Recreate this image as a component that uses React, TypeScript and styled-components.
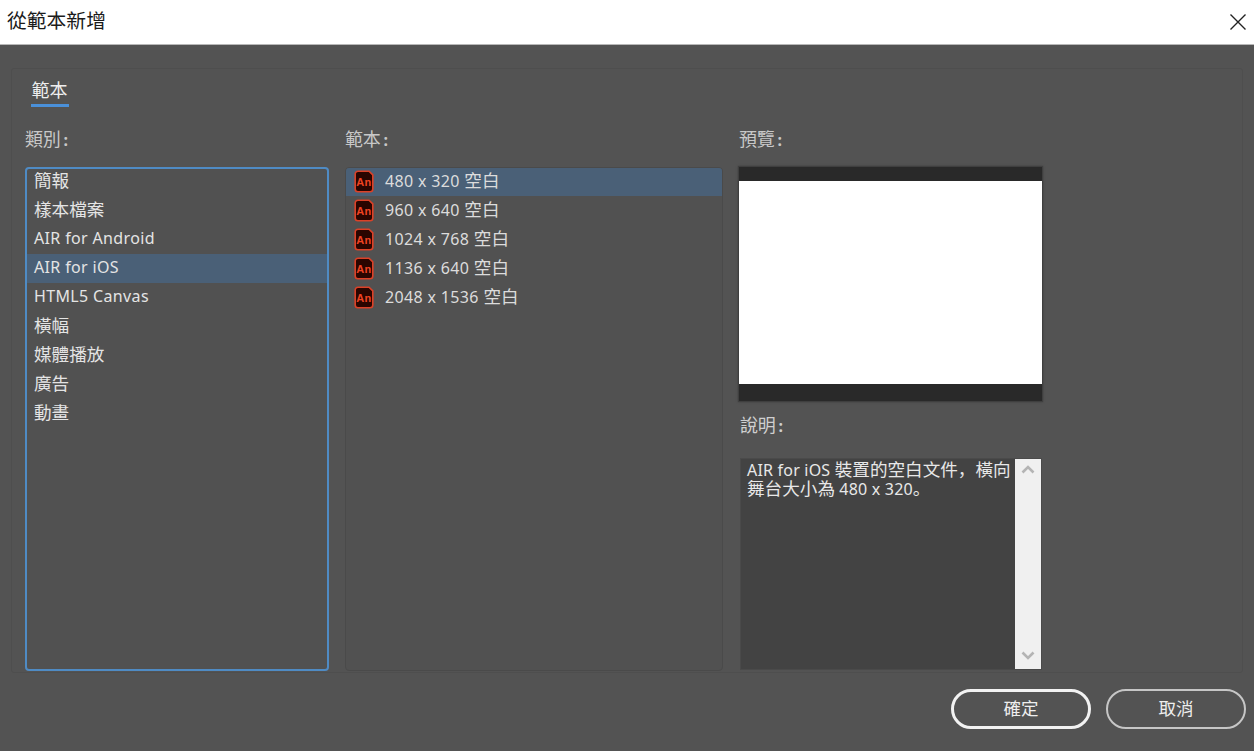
import React from "react";
import styled, { createGlobalStyle } from "styled-components";

const Global = createGlobalStyle`
  html, body { margin: 0; padding: 0; width: 1254px; height: 751px; overflow: hidden; background: #535353; }
  body { font-family: "Noto Sans", "Noto Sans CJK TC", sans-serif; }
  * { box-sizing: border-box; }
`;
const cjk = `"Noto Sans", "Noto Sans CJK TC", sans-serif`;

const Dialog = styled.div`
  width: 1254px; height: 751px; display: flex; flex-direction: column; background: #535353;
`;
const TitleBar = styled.header`
  height: 45px; flex: none; background: #fff; border-bottom: 1px solid #b8b8b8;
  display: flex; align-items: center; justify-content: space-between; padding: 0 8px 2px 7px;
`;
const Title = styled.h1`
  margin: 0; font: 400 19.8px/1 ${cjk}; color: #1b1b1b;
`;
const Close = styled.button`
  border: 0; background: none; padding: 0; width: 16px; height: 16px; display: block; margin-top: 2px;
  svg { display: block; }
`;
const Panel = styled.section`
  margin: 23px 11px 0 11px; height: 605px; flex: none;
  border: 1px solid #4e4e4e; border-radius: 3px; padding: 0 0 0 13px;
`;
const Tabs = styled.nav`
  height: 38px; padding-left: 6px; display: flex; align-items: flex-end;
`;
const Tab = styled.div`
  width: 38px; height: 38px; padding: 9px 1px 0 0; text-align: center; white-space: nowrap;
  border-bottom: 3px solid #4a90d9; color: #eee; font: 400 18px/24px ${cjk};
`;
const Columns = styled.div`
  display: grid; grid-template-columns: 304px 378px 306px; column-gap: 16px; height: 565px;
`;
const Column = styled.div`
  display: flex; flex-direction: column; min-height: 0;
`;
const Label = styled.div`
  height: 60px; flex: none; padding: 20px 0 0 0; color: #c8c8c8; font: 400 18px/24px ${cjk}; letter-spacing: -.2px;
`;
const Colon = styled.span`
  font-size: 16px; margin-left: 3px; font-weight: 700;
`;
const List = styled.ul<{ $focus?: boolean }>`
  list-style: none; margin: 0; padding: 0; height: 504px; overflow: hidden;
  border: ${(p) => (p.$focus ? "2px solid #4f8bc4" : "1px solid #4a4a4a")};
  border-radius: 4px;
  background: #515151;
`;
const Item = styled.li<{ $selected?: boolean; $focus?: boolean }>`
  height: 29px; display: flex; align-items: center; flex: none;
  &:first-child { margin-top: ${(p) => (p.$focus ? "-2px" : "-1px")}; }
  color: #dedede; font: 400 16px/29px ${cjk}; letter-spacing: .35px; white-space: nowrap;
  background: ${(p) => (p.$selected ? "#4a6077" : "transparent")};
`;
const CategoryName = styled.span`
  padding-left: 7px; margin-bottom: 2px; color: #e4e4e4;
`;
const Wide = styled.span`
  font-size: 17.6px; letter-spacing: 0;
`;
const TemplateIcon = styled.svg`
  width: 20px; height: 23px; flex: none; margin-left: 8px; display: block;
`;
const TemplateName = styled.span`
  margin: 0 0 2px 11px; color: #dcdcdc;
`;
const Preview = styled.div`
  width: 305px; height: 236px; flex: none; margin: -1px 0 0 -1px; border: 1px solid #3f3f3f;
  background: #fff; display: flex; flex-direction: column; justify-content: space-between;
  box-shadow: 0 0 2px #3c3c3c;
`;
const PreviewBar = styled.div<{ $h: number }>`
  height: ${(p) => p.$h}px; background: #292929;
`;
const DescLabel = styled(Label)`
  height: 56px; padding-top: 11px; padding-left: 1px; color: #cfcfcf;
`;
const DescBox = styled.div`
  margin-left: 1px; width: 302px; height: 212px; flex: none; display: flex;
  background: #434343; border: 1px solid #4a4a4a;
`;
const DescText = styled.p`
  margin: 0; flex: 1; padding: 1px 0 0 6px; color: #e8e8e8; letter-spacing: .2px;
  font: 400 16px/18px ${cjk}; white-space: nowrap;
`;
const Punctuation = styled.span`
  font-family: "Noto Sans CJK JP", sans-serif; font-size: 17.6px; letter-spacing: 0;
`;
const ScrollBar = styled.div`
  width: 26px; flex: none; background: #f0f0f0; display: flex; flex-direction: column;
  justify-content: space-between; align-items: center; padding: 6px 0 9px;
`;
const Footer = styled.footer`
  display: flex; justify-content: flex-end; gap: 15px; padding: 16px 8px 0 0;
`;
const Button = styled.button<{ $primary?: boolean }>`
  width: 140px; height: 40px; border-radius: 20px; background: transparent;
  border: ${(p) => (p.$primary ? "3px solid #f2f2f2" : "2px solid #c6c6c6")};
  color: #eee; font: 400 17.5px/1 ${cjk}; padding: 0;
`;

const categories = ["簡報", "樣本檔案", "AIR for Android", "AIR for iOS", "HTML5 Canvas", "橫幅", "媒體播放", "廣告", "動畫"];
const templates = ["480 x 320 空白", "960 x 640 空白", "1024 x 768 空白", "1136 x 640 空白", "2048 x 1536 空白"];

const mixed = (text: string) =>
  text.split(/([\u3400-\u9fff]+)/).map((part, i) =>
    /[\u3400-\u9fff]/.test(part) ? <Wide key={i}>{part}</Wide> : part
  );

const AnIcon = () => (
  <TemplateIcon viewBox="0 0 20 23">
    <path d="M4 1.2h11l3.8 3.6V19a2.8 2.8 0 0 1-2.8 2.8H4A2.8 2.8 0 0 1 1.2 19V4A2.8 2.8 0 0 1 4 1.2z" fill="#2a0500" stroke="#dc4127" strokeWidth="1.6" />
    <text x="10" y="15.5" textAnchor="middle" fontFamily='"Liberation Sans", sans-serif' fontSize="11" fontWeight="700" fill="#ef4322">An</text>
  </TemplateIcon>
);
const Chevron = ({ up }: { up?: boolean }) => (
  <svg width="14" height="9" viewBox="0 0 14 9">
    <path d={up ? "M1.5 7.5 7 2l5.5 5.5" : "M1.5 1.5 7 7l5.5-5.5"} fill="none" stroke="#b4b4b4" strokeWidth="2.6" />
  </svg>
);

export default function App() {
  return (
    <Dialog>
      <Global />
      <TitleBar>
        <Title>從範本新增</Title>
        <Close aria-label="關閉">
          <svg width="16" height="16" viewBox="0 0 16 16">
            <path d="M.5.5l15 15M15.5.5l-15 15" stroke="#222" strokeWidth="1.4" fill="none" />
          </svg>
        </Close>
      </TitleBar>
      <Panel>
        <Tabs>
          <Tab>範本</Tab>
        </Tabs>
        <Columns>
          <Column>
            <Label>類別<Colon>:</Colon></Label>
            <List $focus>
              {categories.map((c, i) => (
                <Item key={c} $selected={i === 3} $focus>
                  <CategoryName>{mixed(c)}</CategoryName>
                </Item>
              ))}
            </List>
          </Column>
          <Column>
            <Label>範本<Colon>:</Colon></Label>
            <List>
              {templates.map((t, i) => (
                <Item key={t} $selected={i === 0}>
                  <AnIcon />
                  <TemplateName>{mixed(t)}</TemplateName>
                </Item>
              ))}
            </List>
          </Column>
          <Column>
            <Label>預覽<Colon>:</Colon></Label>
            <Preview>
              <PreviewBar $h={14} />
              <PreviewBar $h={17} />
            </Preview>
            <DescLabel>說明<Colon>:</Colon></DescLabel>
            <DescBox>
              <DescText>
                AIR for iOS {mixed("裝置的空白文件")}<Punctuation>，</Punctuation>{mixed("橫向")}
                <br />
                {mixed("舞台大小為")} 480 x 320<Punctuation>。</Punctuation>
              </DescText>
              <ScrollBar>
                <Chevron up />
                <Chevron />
              </ScrollBar>
            </DescBox>
          </Column>
        </Columns>
      </Panel>
      <Footer>
        <Button $primary>確定</Button>
        <Button>取消</Button>
      </Footer>
    </Dialog>
  );
}
